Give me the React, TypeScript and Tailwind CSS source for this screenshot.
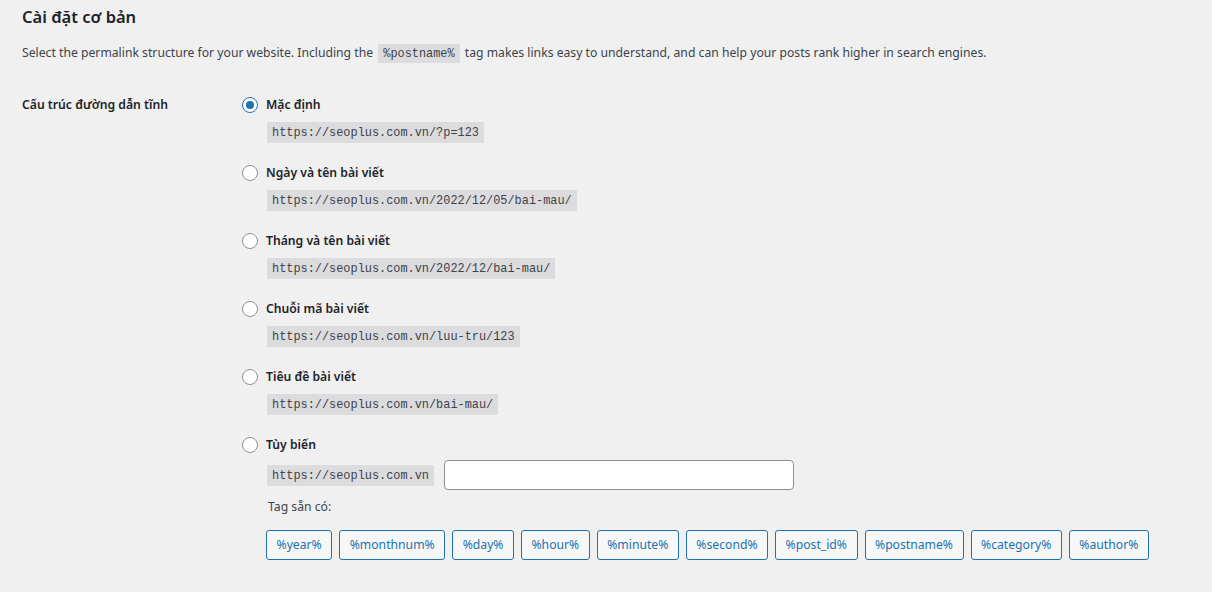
import { useState } from 'react';

const options = [
  { label: 'Mặc định', url: 'https://seoplus.com.vn/?p=123' },
  { label: 'Ngày và tên bài viết', url: 'https://seoplus.com.vn/2022/12/05/bai-mau/' },
  { label: 'Tháng và tên bài viết', url: 'https://seoplus.com.vn/2022/12/bai-mau/' },
  { label: 'Chuỗi mã bài viết', url: 'https://seoplus.com.vn/luu-tru/123' },
  { label: 'Tiêu đề bài viết', url: 'https://seoplus.com.vn/bai-mau/' },
];

const tags = [
  '%year%',
  '%monthnum%',
  '%day%',
  '%hour%',
  '%minute%',
  '%second%',
  '%post_id%',
  '%postname%',
  '%category%',
  '%author%',
];

const mono = "font-['Liberation_Mono',monospace] text-[11.9px]";

function Radio({ checked, onClick }: { checked: boolean; onClick: () => void }) {
  return (
    <button
      type="button"
      onClick={onClick}
      className={`flex h-4 w-4 shrink-0 items-center justify-center rounded-full border bg-white ${
        checked ? 'border-[#2271b1]' : 'border-[#8c8f94]'
      }`}
    >
      {checked && <span className="h-2 w-2 rounded-full bg-[#2271b1]" />}
    </button>
  );
}

export default function App() {
  const [selected, setSelected] = useState(0);
  const [custom, setCustom] = useState('');

  return (
    <div className="min-h-screen bg-[#f0f0f1] pl-[22px] pr-5 font-['Noto_Sans',sans-serif] text-[12.2px] text-[#3c434a]">
      <h2 className="pt-[5px] text-[16.5px] font-semibold leading-6 text-[#1d2327]">Cài đặt cơ bản</h2>

      <p className="mt-[14px] leading-5">
        Select the permalink structure for your website. Including the{' '}
        <code className={`${mono} mx-[2px] bg-[#dcdcde] px-[5px] pt-[3px] pb-[2px]`}>%postname%</code>{' '}
        tag makes links easy to understand, and can help your posts rank higher in search engines.
      </p>

      <div className="mt-[31px] flex">
        <div className="w-[220px] shrink-0 font-semibold leading-5 text-[#1d2327]">Cấu trúc đường dẫn tĩnh</div>

        <div className="flex flex-col">
          {options.map((o, i) => (
            <div key={o.label} className="mb-5 flex flex-col">
              <label className="flex h-5 cursor-pointer items-center gap-2 font-semibold text-[#1d2327]" onClick={() => setSelected(i)}>
                <Radio checked={selected === i} onClick={() => setSelected(i)} />
                {o.label}
              </label>
              <div className="mt-[7px] pl-[25px]">
                <code className={`${mono} inline-block bg-[#dcdcde] px-[5px] pt-[3px] pb-[2px] leading-4`}>{o.url}</code>
              </div>
            </div>
          ))}

          <div className="flex flex-col">
            <label className="flex h-5 cursor-pointer items-center gap-2 font-semibold text-[#1d2327]" onClick={() => setSelected(5)}>
              <Radio checked={selected === 5} onClick={() => setSelected(5)} />
              Tùy biến
            </label>
            <div className="mt-[5px] flex items-center gap-[10px] pl-[25px]">
              <code className={`${mono} inline-block bg-[#dcdcde] px-[5px] pt-[3px] pb-[2px] leading-4`}>https://seoplus.com.vn</code>
              <input
                value={custom}
                onChange={(e) => setCustom(e.target.value)}
                className="h-[30px] w-[350px] rounded-[4px] border border-[#8c8f94] bg-white px-2 text-[14px] text-[#2c3338] outline-none"
              />
            </div>
            <div className="mt-[7px] pl-[26px] leading-5">Tag sẵn có:</div>
            <div className="mt-[13px] flex flex-wrap gap-[7px] pl-[24px]">
              {tags.map((t) => (
                <button
                  key={t}
                  type="button"
                  className="h-[30px] rounded-[3px] border border-[#2271b1] bg-[#f6f7f7] px-[9.5px] text-[12.2px] text-[#2271b1]"
                >
                  {t}
                </button>
              ))}
            </div>
          </div>
        </div>
      </div>
    </div>
  );
}
